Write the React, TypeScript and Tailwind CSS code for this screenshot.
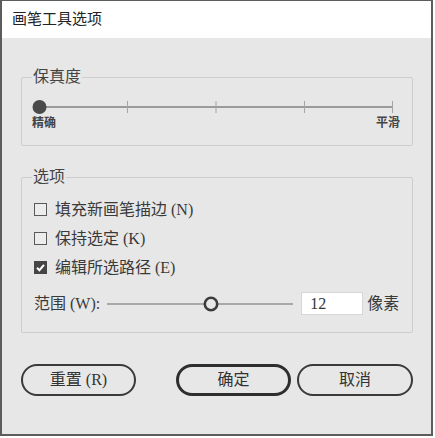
import { useState } from "react";

const serif = "font-['Liberation_Serif','Noto_Sans_CJK_SC',serif]";
const sans = "font-['Liberation_Sans','Noto_Sans_CJK_SC',sans-serif]";

function CheckRow({ label, checked }: { label: string; checked?: boolean }) {
    return (
        <div className="flex items-center h-[29px]">
            {checked ? (
                <span className="w-[13px] h-[13px] bg-[#454545] border border-[#454545] flex items-center justify-center">
                    <svg width="11" height="11" viewBox="0 0 11 11">
                        <path d="M2 5.8 L4.4 8.2 L9 2.8" stroke="#fff" strokeWidth="2" fill="none" />
                    </svg>
                </span>
            ) : (
                <span className="w-[13px] h-[13px] border border-[#5a5a5a] bg-[#ececec]" />
            )}
            <span className="ml-[8px] text-[16px] leading-[20px] text-[#3a3a3a]">{label}</span>
        </div>
    );
}

export default function App() {
    const [width, setWidth] = useState("12");

    return (
        <div className={`w-[435px] h-[438px] bg-white ${serif}`}>
            <div className="w-[433px] h-[436px] border-t border-l-2 border-r-2 border-b-2 border-[#5c5c5c] bg-[#e7e7e7] flex flex-col">
                <div className={`h-[37px] bg-white flex items-center pl-[10px] text-[15px] text-[#222] ${sans}`}>
                    画笔工具选项
                </div>

                <div className="flex flex-col pl-[19px] pr-[18px] pt-[29px]">
                    <fieldset className="border border-[#cdcdcd] rounded-[2px] px-[10px] pb-[15px]">
                        <legend className="px-[1px] text-[16px] leading-[20px] text-[#444]">保真度</legend>
                        <svg width="370" height="16" className="mt-[12px] block">
                            <line x1="7" y1="8" x2="361" y2="8" stroke="#9a9a9a" strokeWidth="2" />
                            <line x1="95.5" y1="2" x2="95.5" y2="14" stroke="#a5a5a5" strokeWidth="1" />
                            <line x1="184" y1="2" x2="184" y2="14" stroke="#a5a5a5" strokeWidth="1" />
                            <line x1="272.5" y1="2" x2="272.5" y2="14" stroke="#a5a5a5" strokeWidth="1" />
                            <line x1="360.5" y1="2" x2="360.5" y2="14" stroke="#a5a5a5" strokeWidth="1" />
                            <circle cx="7.5" cy="8" r="7" fill="#4a4a4a" />
                        </svg>
                        <div className={`mt-[1px] flex justify-between pr-[2px] text-[12px] leading-[14px] font-bold text-[#444] ${sans}`}>
                            <span>精确</span>
                            <span>平滑</span>
                        </div>
                    </fieldset>

                    <fieldset className="mt-[21px] border border-[#cdcdcd] rounded-[2px] pl-[12px] pr-[10px] pt-[8px] pb-[17px]">
                        <legend className="-ml-[2px] px-[1px] text-[16px] leading-[20px] text-[#444]">选项</legend>
                        <CheckRow label="填充新画笔描边 (N)" />
                        <CheckRow label="保持选定 (K)" />
                        <CheckRow label="编辑所选路径 (E)" checked />

                        <div className="mt-[10px] flex items-center h-[23px] text-[16px] text-[#3a3a3a] whitespace-nowrap">
                            <span className="leading-[20px] shrink-0">范围 (W):</span>
                            <svg width="186" height="18" className="ml-[7px] block shrink-0">
                                <line x1="0" y1="9" x2="186" y2="9" stroke="#a8a8a8" strokeWidth="2" />
                                <circle cx="104" cy="9" r="6.2" fill="#e7e7e7" stroke="#3c3c3c" strokeWidth="2.6" />
                            </svg>
                            <input
                                value={width}
                                onChange={(e) => setWidth(e.target.value)}
                                className="ml-[8px] w-[62px] h-[23px] shrink-0 bg-white border border-[#d6d6d6] pl-[8px] text-[16px] text-[#333] outline-none"
                            />
                            <span className="ml-[4px] leading-[20px] shrink-0">像素</span>
                        </div>
                    </fieldset>

                    <div className="mt-[31px] flex items-center text-[16px] text-[#333]">
                        <button className="w-[115px] h-[32px] rounded-full border-2 border-[#3a3a3a] flex items-center justify-center">
                            重置 (R)
                        </button>
                        <button className="ml-[40px] w-[115px] h-[32px] rounded-full border-[3px] border-[#2e2e2e] flex items-center justify-center">
                            确定
                        </button>
                        <button className="ml-[6px] w-[116px] h-[32px] rounded-full border-2 border-[#3a3a3a] flex items-center justify-center">
                            取消
                        </button>
                    </div>
                </div>
            </div>
        </div>
    );
}
